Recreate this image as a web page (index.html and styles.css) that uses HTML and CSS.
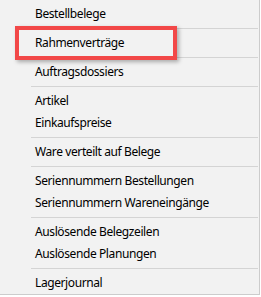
FILE: index.html
```html
<!DOCTYPE html>
<html lang="de">
<head>
    <meta charset="UTF-8">
    <title>Menü</title>
    <link rel="stylesheet" href="styles.css">
</head>
<body>
    <div class="menu">
        <div class="menu-item">Bestellbelege</div>
        <div class="menu-sep"></div>
        <div class="menu-item">Rahmenverträge</div>
        <div class="menu-sep"></div>
        <div class="menu-item">Auftragsdossiers</div>
        <div class="menu-sep"></div>
        <div class="menu-item">Artikel</div>
        <div class="menu-item">Einkaufspreise</div>
        <div class="menu-sep"></div>
        <div class="menu-item">Ware verteilt auf Belege</div>
        <div class="menu-sep"></div>
        <div class="menu-item">Seriennummern Bestellungen</div>
        <div class="menu-item">Seriennummern Wareneingänge</div>
        <div class="menu-sep"></div>
        <div class="menu-item">Auslösende Belegzeilen</div>
        <div class="menu-item">Auslösende Planungen</div>
        <div class="menu-sep"></div>
        <div class="menu-item">Lagerjournal</div>

        <!-- annotation around the highlighted entry -->
        <div class="highlight"></div>
    </div>
</body>
</html>
```

FILE: styles.css
```css
body {
    margin: 0;
    background: #fff;
    font-family: "Noto Sans", "DejaVu Sans", sans-serif;
    font-size: 12px;
    letter-spacing: -0.4px;
    color: #000;
}
.menu {
    position: relative;
    width: 259px;
    padding-top: 3px;
    background: #f2f2f2;
    border-right: 1px solid #cccccc;
    border-bottom: 1px solid #cccccc;
}
.menu-item {
    height: 22px;
    line-height: 22px;
    padding-left: 35px;
    white-space: nowrap;
}
.menu-sep {
    height: 1px;
    margin: 3px 1px 3px 31px;
    background: #d4d4d4;
}
.highlight {
    position: absolute;
    left: 15px;
    top: 26px;
    width: 162px;
    height: 34px;
    box-sizing: border-box;
    border: 4px solid #f24848;
    box-shadow: 2px 2px 4px rgba(0, 0, 0, 0.3);
}
```
